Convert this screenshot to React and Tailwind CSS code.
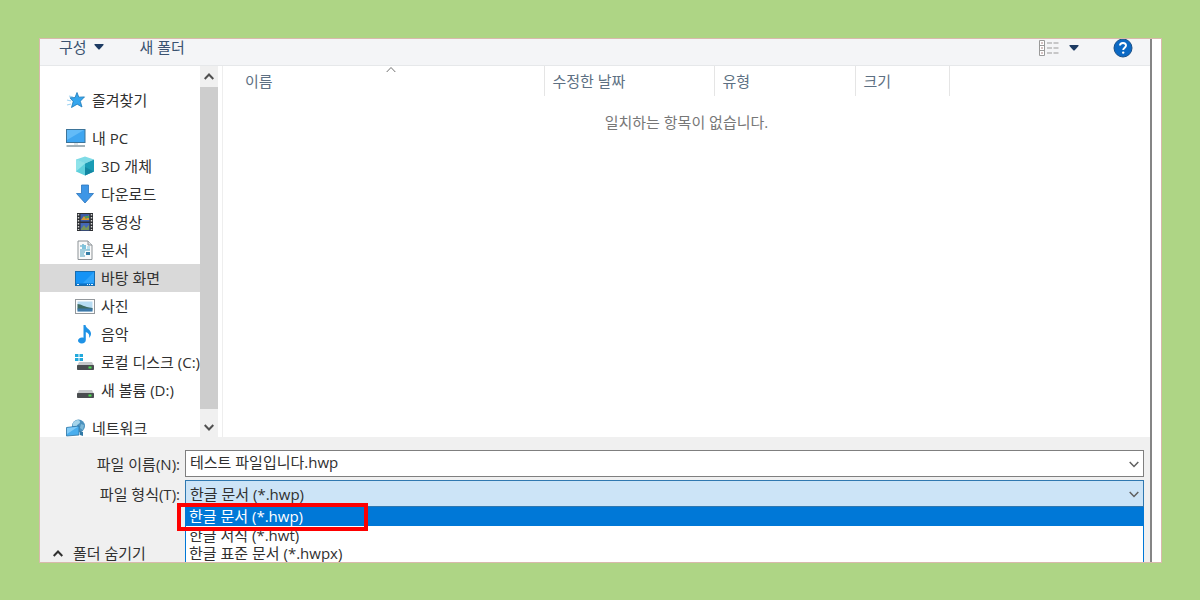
import { useState } from "react";

const TREE = [
  { id: "3d", label: "3D 개체", icon: CubeIcon },
  { id: "downloads", label: "다운로드", icon: DownloadIcon },
  { id: "videos", label: "동영상", icon: FilmIcon },
  { id: "documents", label: "문서", icon: DocumentIcon },
  { id: "desktop", label: "바탕 화면", icon: DesktopIcon },
  { id: "pictures", label: "사진", icon: PictureIcon },
  { id: "music", label: "음악", icon: MusicIcon },
  { id: "c", label: "로컬 디스크 (C:)", icon: SystemDriveIcon },
  { id: "d", label: "새 볼륨 (D:)", icon: DriveIcon },
];

const FILE_TYPES = ["한글 문서 (*.hwp)", "한글 서식 (*.hwt)", "한글 표준 문서 (*.hwpx)"];

function StarIcon() {
  return (
    <svg viewBox="0 0 20 20" className="size-5 shrink-0">
      <path d="M3 6l4 1M1 10l4 1M1 15l4-1" stroke="#9fd3f2" strokeWidth="1.2" />
      <path
        d="M11 2.500l1.800 4.700 5.700-.3-4.200 4.300 1.700 5.800-4.800-2.800-5.700 3.300 1.700-6L4 7.800l5-.2z"
        fill="#35a6ee"
        stroke="#1c79b8"
        strokeWidth="0.8"
      />
    </svg>
  );
}

function PcIcon() {
  return (
    <svg viewBox="0 0 20 20" className="size-5 shrink-0">
      <rect x="0.5" y="1.5" width="18.5" height="13" fill="#3fa6f1" stroke="#3d7499" />
      <path d="M1 2h17L1 12z" fill="#62bbf8" />
      <path d="M8 15h4v2H8z" fill="#dde4e8" />
      <path d="M0.500 17h18.500v2H0.500z" fill="#a3b2b9" />
    </svg>
  );
}

function CubeIcon() {
  return (
    <svg viewBox="0 0 20 20" className="size-5 shrink-0">
      <path d="M10 0.500l9 3-9 4-9-4z" fill="#7fdbe6" />
      <path d="M1 3.500l9 4v12L1 15.500z" fill="#5fd0dc" />
      <path d="M1 3.500l9 4-9 8z" fill="#8fe3ea" />
      <path d="M19 3.500l-9 4v12l9-4z" fill="#1a9cb5" />
      <path d="M10 11l9 4.500-9 4z" fill="#1287a3" />
    </svg>
  );
}

function DownloadIcon() {
  return (
    <svg viewBox="0 0 20 20" className="size-5 shrink-0">
      <path
        d="M6.500 1h7v8.500h5L10 19 1.500 9.500h5z"
        fill="#3e96e6"
        stroke="#2874bd"
        strokeWidth="0.8"
      />
    </svg>
  );
}

function FilmIcon() {
  return (
    <svg viewBox="0 0 20 20" className="size-5 shrink-0">
      <rect x="2" y="1" width="16" height="18" fill="#2d2f33" />
      <path d="M3.500 2v16M16.500 2v16" stroke="#d6d6d6" strokeWidth="1.4" strokeDasharray="1.500 1.500" />
      <rect x="5.500" y="2" width="9" height="7.500" fill="#3c5ca8" />
      <path d="M6 8l3-4 2 3 3-4v5z" fill="#d59a33" />
      <path d="M10 4h4v2h-4z" fill="#4f9b57" />
      <rect x="5.500" y="11" width="9" height="7.500" fill="#4568b6" />
      <path d="M6 17l3-4 2 3 3-3v5H6z" fill="#77945b" />
    </svg>
  );
}

function DocumentIcon() {
  return (
    <svg viewBox="0 0 20 20" className="size-5 shrink-0">
      <path d="M3 1h10l4 4v14.500H3z" fill="#fafafa" stroke="#8c9296" />
      <path d="M13 1v4h4" fill="#dfe3e5" stroke="#8c9296" />
      <path d="M5 6h2M8 4v5M5 10h10M5 12h5M5 14h4M5 16h5" stroke="#4c9fbd" strokeWidth="1.2" fill="none" />
      <path d="M7 5h4v4H7z" fill="#7fc3dc" />
      <path d="M12 7h3M12 9h3" stroke="#7fc3dc" />
      <path d="M11 12h4v3h-4z" fill="#377fa6" />
    </svg>
  );
}

function DesktopIcon() {
  return (
    <svg viewBox="0 0 20 20" className="size-5 shrink-0">
      <rect x="0.500" y="3.500" width="19" height="14" fill="#1593f5" stroke="#176caf" />
      <path d="M19 4v11H8z" fill="#2ea3fa" />
      <path d="M1 15.500h18V17H1z" fill="#0e72c4" />
      <path d="M2 16.500h2M12 16.500h1M14 16.500h1M16 16.500h2" stroke="#e3f3ff" />
    </svg>
  );
}

function PictureIcon() {
  return (
    <svg viewBox="0 0 20 20" className="size-5 shrink-0">
      <rect x="0.500" y="3.500" width="19" height="14" fill="#fdfdfd" stroke="#93989c" />
      <rect x="2.500" y="5.500" width="15" height="10" fill="#b7dcf3" />
      <path d="M2.500 8c4 0 6 3 15 4v1.500h-15z" fill="#3e6b62" />
      <path d="M2.500 12.500h15v3h-15z" fill="#3c78a8" />
    </svg>
  );
}

function MusicIcon() {
  return (
    <svg viewBox="0 0 20 20" className="size-5 shrink-0">
      <path
        d="M8.500 1h2c.3 3.500 5.500 4.500 5.500 8.500 0 2-.8 3.300-2 4.500 1-3.500-.8-5-3.200-6v8c0 2-1.800 3.500-4 3.500S3 18.300 3 16.600s1.800-3.100 4-3.100c.6 0 1.100.1 1.500.3z"
        fill="#1e92e6"
      />
    </svg>
  );
}

function DriveBody() {
  return (
    <>
      <path d="M4 10h13l2 4H2z" fill="#c5c8ca" />
      <rect x="2" y="13" width="17" height="5" rx="0.800" fill="#4a4d50" />
      <rect x="13.500" y="14.500" width="3" height="2" fill="#4ce04f" />
    </>
  );
}

function SystemDriveIcon() {
  return (
    <svg viewBox="0 0 20 20" className="size-5 shrink-0">
      <DriveBody />
      <path d="M0 2h3.500v3H0zM4.500 2H8v3H4.500zM0 6h3.500v3H0zM4.500 6H8v3H4.500z" fill="#22a9dc" />
    </svg>
  );
}

function DriveIcon() {
  return (
    <svg viewBox="0 0 20 20" className="size-5 shrink-0">
      <DriveBody />
    </svg>
  );
}

function NetworkIcon() {
  return (
    <svg viewBox="0 0 20 20" className="size-5 shrink-0">
      <circle cx="12.500" cy="8" r="6.500" fill="#4b91bd" />
      <path d="M9 3c3-2 5-1 5 1s-3 2-3 4-3 1-4 0 0-4 2-5z" fill="#a5d4ea" />
      <path d="M15 6l3 1-1 5-3-2z" fill="#7bb8d8" />
      <path d="M0.500 9.500L13 8v9L0.500 18z" fill="#49aeee" stroke="#2d74a3" strokeWidth="0.8" />
      <path d="M1 10l11-1.300L1 16z" fill="#82cbf7" />
      <path d="M14 13l3 1v4l-3-1z" fill="#337aa6" />
    </svg>
  );
}

function ViewIcon() {
  return (
    <svg viewBox="0 0 20 16" className="h-4 w-5">
      <path d="M0.500 0.500h5v15h-5zM0.500 5.500h5M0.500 10.500h5" fill="#fff" stroke="#9a9a9a" />
      <path d="M3 2v2M3 7v2M3 12v2" stroke="#a98686" />
      <path d="M8 3h5M14.500 3h5M8 8h5M14.500 8h5M8 13h5M14.500 13h5" stroke="#9a9a9a" strokeWidth="1.200" />
    </svg>
  );
}

function Caret() {
  return (
    <svg viewBox="0 0 10 6" className="h-[6px] w-[10px]">
      <path d="M0.500 0h9v1L5.500 5.500h-1L0.500 1z" fill="#1d3b63" />
    </svg>
  );
}

function Chevron({ className }) {
  return (
    <svg viewBox="0 0 10 7" className={className} fill="none" stroke="currentColor">
      <path d="M0.700 1L5 5.500 9.300 1" />
    </svg>
  );
}

function TreeItem({ label, icon: Icon, child, active, onClick }) {
  return (
    <button
      type="button"
      onClick={onClick}
      className={`flex h-7 w-full shrink-0 items-center gap-1.5 overflow-hidden whitespace-nowrap text-left ${
        child ? "pl-[35px]" : "pl-[26px]"
      } ${active ? "bg-[#d9d9d9]" : ""}`}
    >
      <Icon />
      {label}
    </button>
  );
}

export default function App() {
  const [folder, setFolder] = useState("desktop");
  const [fileName, setFileName] = useState("테스트 파일입니다.hwp");
  const [fileType, setFileType] = useState(FILE_TYPES[0]);

  return (
    <div className="h-screen bg-[#aed585] pt-[38px] pr-[38px] pb-[37px] pl-[39px] font-['Open_Sans','Noto_Sans_CJK_KR',sans-serif] text-[15px] leading-[18px] text-[#303030]">
      <div className="h-full overflow-hidden border border-[#d9b9ac] bg-white pr-[9px]">
        <div className="flex h-full flex-col border-r-2 border-[#858585]">
          {/* toolbar */}
          <div className="flex h-[27px] shrink-0 items-start border-b border-[#e6e8ea] bg-[#f4f5f7] pr-[17px] pl-[19px] leading-4 text-[#3a5270]">
            <button type="button" className="flex items-center gap-[7px]">
              구성
              <Caret />
            </button>
            <button type="button" className="ml-9">
              새 폴더
            </button>
            <div className="ml-auto flex h-[18px] items-center">
              <button type="button" aria-label="보기" className="flex items-center gap-[10px]">
                <ViewIcon />
                <Caret />
              </button>
              <button type="button" aria-label="도움말" className="ml-[34px]">
                <svg viewBox="0 0 20 20" className="size-5">
                  <circle cx="10" cy="10" r="9" fill="#0b69c4" stroke="#1b4f86" />
                  <path
                    d="M7 7.600C7 5.800 8.300 5 10 5s3 .9 3 2.600c0 2-2.800 2.200-2.800 4.400"
                    fill="none"
                    stroke="#fff"
                    strokeWidth="1.900"
                  />
                  <circle cx="10.200" cy="14.600" r="1.200" fill="#fff" />
                </svg>
              </button>
            </div>
          </div>

          <div className="flex min-h-0 flex-1">
            {/* folder tree */}
            <nav className="flex w-40 shrink-0 flex-col gap-[10px] overflow-hidden pt-5">
              <TreeItem label="즐겨찾기" icon={StarIcon} />
              <div>
                <TreeItem label="내 PC" icon={PcIcon} />
                {TREE.map((item) => (
                  <TreeItem
                    key={item.id}
                    label={item.label}
                    icon={item.icon}
                    child
                    active={folder === item.id}
                    onClick={() => setFolder(item.id)}
                  />
                ))}
              </div>
              <TreeItem label="네트워크" icon={NetworkIcon} />
            </nav>
            <div className="flex w-[18px] shrink-0 flex-col bg-[#f0f0f0] text-[#505050]">
              <button type="button" aria-label="위로" className="flex h-[21px] items-center justify-center">
                <Chevron className="h-[7px] w-[10px] rotate-180 stroke-2" />
              </button>
              <div className="flex-1 bg-[#cdcdcd]" />
              <button type="button" aria-label="아래로" className="flex h-7 items-center justify-center pt-2">
                <Chevron className="h-[7px] w-[10px] stroke-2" />
              </button>
            </div>

            {/* file list */}
            <div className="relative ml-1 flex-1 border-l border-[#eeeeee]">
              <Chevron className="absolute top-0 left-[163px] h-[7px] w-[10px] rotate-180 text-[#707070]" />
              <table className="w-full table-fixed border-collapse">
                <thead>
                  <tr className="h-[30px] text-left text-[#5d7083]">
                    <th className="w-[321px] border-r border-[#e5e5e5] pl-[22px] font-normal">이름</th>
                    <th className="w-[170px] border-r border-[#e5e5e5] pl-2 font-normal">수정한 날짜</th>
                    <th className="w-[141px] border-r border-[#e5e5e5] pl-2 font-normal">유형</th>
                    <th className="w-[94px] border-r border-[#e5e5e5] pl-2 font-normal">크기</th>
                    <td />
                  </tr>
                </thead>
                <tbody>
                  <tr>
                    <td colSpan={5} className="pt-[17px] text-center text-[#777777]">
                      일치하는 항목이 없습니다.
                    </td>
                  </tr>
                </tbody>
              </table>
            </div>
          </div>

          {/* file name and type */}
          <div className="grid shrink-0 grid-cols-[140px_1fr] gap-x-[5px] bg-[#f0f0f0] pt-[13px] pr-[6px]">
            <label htmlFor="file-name" className="self-center text-right whitespace-nowrap">
              파일 이름(N):
            </label>
            <div className="relative">
              <input
                id="file-name"
                type="text"
                value={fileName}
                onChange={(e) => setFileName(e.target.value)}
                className="block h-[27px] w-full border border-[#7f7f7f] bg-white pr-6 pb-1 pl-1 outline-none"
              />
              <Chevron className="pointer-events-none absolute top-[11px] right-[5px] h-[7px] w-[10px] stroke-[1.5] text-[#606060]" />
            </div>

            <label htmlFor="file-type" className="mt-[3px] self-center text-right whitespace-nowrap">
              파일 형식(T):
            </label>
            <div className="relative mt-[3px]">
              <select
                id="file-type"
                value={fileType}
                onChange={(e) => setFileType(e.target.value)}
                className="block h-[27px] w-full appearance-none border border-[#2f78b0] bg-[#cce4f7] pr-6 pl-1 outline-none"
              >
                {FILE_TYPES.map((type) => (
                  <option key={type}>{type}</option>
                ))}
              </select>
              <Chevron className="pointer-events-none absolute top-[11px] right-[5px] h-[7px] w-[10px] stroke-[1.5] text-[#606060]" />
            </div>

            <button type="button" className="flex items-center gap-[10px] self-end pl-[13px]">
              <Chevron className="h-[7px] w-[10px] rotate-180 stroke-2" />
              폴더 숨기기
            </button>
            <div className="relative">
              <ul role="listbox" aria-label="파일 형식" className="border-x border-[#0078d7] bg-white">
                {FILE_TYPES.map((type) => (
                  <li
                    key={type}
                    role="option"
                    aria-selected={type === fileType}
                    onClick={() => setFileType(type)}
                    className={`pl-[3px] ${type === fileType ? "bg-[#0078d7] pb-px text-white" : ""}`}
                  >
                    {type}
                  </li>
                ))}
              </ul>
              <div className="pointer-events-none absolute -top-1 -left-2 h-7 w-[191px] border-4 border-[#fe0000]" />
            </div>
          </div>
        </div>
      </div>
    </div>
  );
}
